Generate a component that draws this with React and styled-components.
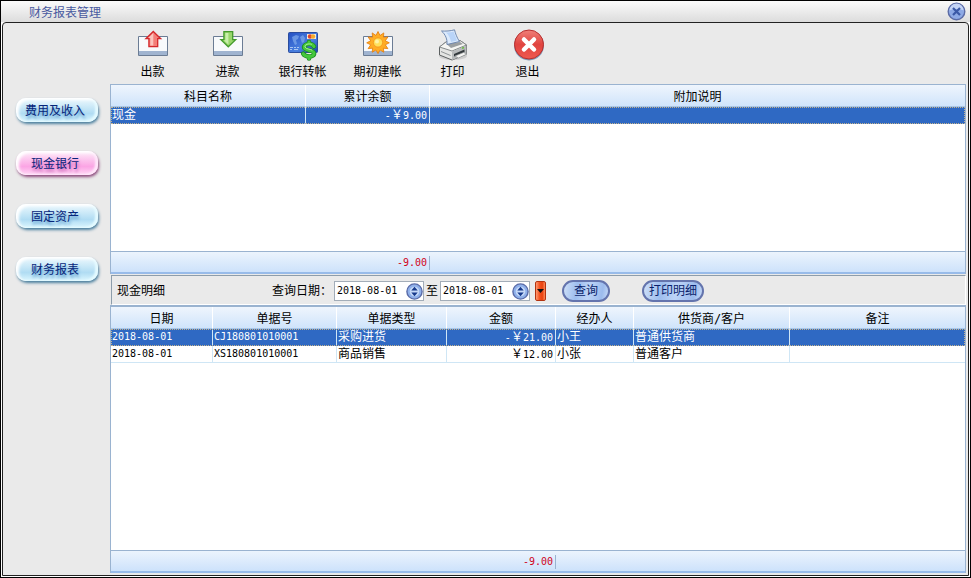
import React, { useState } from 'react'
import styled, { createGlobalStyle } from 'styled-components'

const GlobalStyle = createGlobalStyle`
  * { box-sizing: border-box; }
  body { margin: 0; }
  body, button, input {
    font-family: "DejaVu Sans Mono", "Noto Sans CJK SC", monospace;
    font-size: 12px;
    line-height: 16px;
  }
  button { padding: 0; cursor: pointer; }
`

const Window = styled.div`
  display: flex;
  flex-direction: column;
  min-height: 100vh;
  border: 1px solid #000;
  background: #fff;
`
const TitleBar = styled.header`
  display: flex;
  align-items: center;
  justify-content: space-between;
  height: 21px;
  padding: 0 4px 0 28px;
  background: linear-gradient(#fbfbfb, #dcdcdc);
`
const Title = styled.h1`
  margin: 0;
  padding-top: 3px;
  font-size: 12px;
  font-weight: normal;
  color: #48599f;
`
const CloseButton = styled.button`
  display: flex;
  border: 0;
  background: none;
`
const Body = styled.div`
  display: flex;
  flex: 1;
  margin: 0 1px 1px;
  padding: 0 2px 2px 0;
  border: 1px solid #222;
  border-radius: 4px 4px 0 0;
  background: #eaeaea;
`
const Sidebar = styled.nav`
  display: flex;
  flex-direction: column;
  gap: 29px;
  width: 107px;
  padding: 75px 12px 0 13px;
`
const NavButton = styled.button`
  height: 24px;
  padding: 1px 4px 0 0;
  border: 0;
  border-radius: 10px;
  color: #06257a;
  text-shadow: 1px 3px 3px ${props => props.$active ? '#c763b4' : '#5b9bcd'};
  background: ${props => props.$active
    ? 'linear-gradient(#fff0fb, #fcc6ee 35%, #fba4e4 65%, #ffd9f6)'
    : 'linear-gradient(#eef9fe, #cdeaf8 35%, #b0dcf3 65%, #dcf7ff)'};
  box-shadow:
    inset 3px 2px 3px #fff,
    inset -3px -1px 2px ${props => props.$active ? '#ffe6fa' : '#e4faff'},
    1px 2px 3px ${props => props.$active ? '#8d4a7d' : '#4b7f9e'};
`
const Main = styled.main`
  display: flex;
  flex: 1;
  flex-direction: column;
  min-width: 0;
`
const Toolbar = styled.div`
  display: flex;
  height: 61px;
  padding: 6px 0 0 5px;
`
const ToolButton = styled.button`
  display: flex;
  flex-direction: column;
  align-items: center;
  gap: 3px;
  width: 75px;
  border: 0;
  color: #000;
  background: none;
`
const Panel = styled.section`
  display: flex;
  flex-direction: column;
  flex: ${props => props.$grow ? '1' : '0 0 190px'};
  border: solid #9ab3d0;
  border-width: ${props => props.$grow ? '2px' : '1px'} 1px 0;
  background: #fff;
`
const Table = styled.table`
  width: 100%;
  table-layout: fixed;
  border-spacing: 0;
`
const Col = styled.col`
  width: ${props => props.$width ? props.$width + 'px' : 'auto'};
`
const HeadCell = styled.th`
  height: 22px;
  padding: 2px 0 0;
  border-right: 1px solid #fff;
  border-bottom: 1px solid #a9c6e6;
  font-weight: normal;
  background: linear-gradient(#eff5fd, #cfe4fb);
  &:last-child { border-right: 0; }
`
const Row = styled.tr`
  color: ${props => props.$selected ? '#fff' : '#000'};
  background: ${props => props.$selected ? '#2f69c3' : '#fff'};
  outline: ${props => props.$selected ? '1px dotted #c3b28c' : 'none'};
  outline-offset: -1px;
`
const Cell = styled.td`
  height: 17px;
  padding: 0 2px 0 1px;
  border-right: 1px solid #cfe6f5;
  border-bottom: 1px solid ${props => props.$selected ? '#2f69c3' : '#cfe6f5'};
  font-size: ${props => props.$small ? '10px' : '12px'};
  line-height: 14px;
  text-align: ${props => props.$right ? 'right' : 'left'};
  white-space: nowrap;
  &:last-child { border-right: 0; }
`
/* full-width sign beside the 6px digits */
const Yen = styled.span`
  font-family: "Noto Sans CJK SC", sans-serif;
  font-size: 12px;
  line-height: 12px;
`
const Filler = styled.div`
  flex: 1;
`
const Footer = styled.div`
  display: flex;
  align-items: center;
  height: 23px;
  padding-top: 2px;
  border-top: 1px solid #9ab3d0;
  border-bottom: 2px solid #98bbe9;
  background: linear-gradient(#ecf4fd, #cde2fb);
`
const Total = styled.span`
  width: ${props => props.$width}px;
  padding-right: 2px;
  border-right: 1px solid #9ab3d0;
  font-size: 10px;
  line-height: 14px;
  text-align: right;
  color: #d0021b;
`
const FilterBar = styled.form`
  display: flex;
  align-items: center;
  height: 30px;
  margin: 1px 0 0 1px;
  padding: 2px 0 0 5px;
  border: 1px solid #8d9dab;
  border-bottom-color: #fff;
  border-right-color: #fff;
`
const FilterTitle = styled.h2`
  width: 155px;
  margin: 0;
  font-size: 12px;
  font-weight: normal;
`
const DateField = styled.div`
  display: flex;
  align-items: center;
  width: 90px;
  height: 20px;
  margin: 0 2px;
  border: 1px solid #a3adb8;
  background: #fff;
`
const DateInput = styled.input`
  flex: 1;
  min-width: 0;
  height: 16px;
  padding: 0 0 0 2px;
  border: 0;
  outline: 0;
  font-size: 10px;
  background: none;
`
const SpinButton = styled.button`
  display: flex;
  border: 0;
  background: none;
`
const RangeButton = styled.button`
  display: flex;
  align-items: center;
  justify-content: center;
  width: 11px;
  height: 20px;
  margin-left: 3px;
  border: 1px solid #b3330f;
  border-radius: 2px;
  background: linear-gradient(90deg, #ff9a70, #f4511e 40%, #e9430f 70%, #ff8a5a);
`
const PillButton = styled.button`
  width: ${props => props.$width}px;
  height: 22px;
  margin-left: ${props => props.$gap}px;
  border: 2px solid #6474ad;
  border-radius: 11px;
  color: #0a1f6b;
  line-height: 14px;
  background: linear-gradient(100deg, #cfe0f8, #9dbdee 30%, #bdd4f7 55%, #9cbbed 85%, #c9dcf8);
`

const Tray = () => (
  <>
    <path d="M1.5 7.5h29v19h-29z" fill="#f8fafc" stroke="#6b7c94" />
    <path d="M2 22h28v4H2z" fill="#a0b4d0" />
  </>
)
const OutIcon = () => (
  <svg width="32" height="32" viewBox="0 0 32 32">
    <Tray />
    <path d="M16.300 2.500l7.400 7.200h-3v8h-8.800v-8h-3z" fill="#f47e78" stroke="#d4282c" strokeWidth="1.300" />
    <path d="M16.300 4l-5 5h2v7.500h3z" fill="#fbc4be" />
  </svg>
)
const InIcon = () => (
  <svg width="32" height="32" viewBox="0 0 32 32">
    <Tray />
    <path d="M16.300 17.800l7.400-7.200h-3v-8h-8.800v8h-3z" fill="#98d66b" stroke="#439a2c" strokeWidth="1.300" />
    <path d="M13.400 4h3v11.500l-4.500-4.200h1.500z" fill="#c9efac" />
  </svg>
)
const TransferIcon = () => (
  <svg width="32" height="32" viewBox="0 0 32 32">
    <defs>
      <linearGradient id="card" x1="0" y1="0" x2="1" y2="1">
        <stop offset="0" stopColor="#2450c4" /><stop offset=".6" stopColor="#4a80df" /><stop offset="1" stopColor="#1c46ad" />
      </linearGradient>
    </defs>
    <rect x="1.5" y="3.5" width="29" height="20" rx="1" fill="url(#card)" stroke="#2b4d9d" />
    <path d="M5 8l4-2 3 1-1 3-2 1 1 4-2 1-2-4zM13 8l3-2 2 3-1 4-2 1-1-3z" fill="#80abeb" opacity=".7" />
    <path d="M3 18.500h3m1 0h2m1 0h2M3 20.500h2m2 0h4" stroke="#a9c6f2" />
    <rect x="20" y="5" width="9" height="5" fill="#f6edd6" />
    <circle cx="23" cy="7.500" r="2.200" fill="#df442f" /><circle cx="26" cy="7.500" r="2.200" fill="#f4a82c" />
    <g fill="none" strokeLinecap="round">
      <path d="M27 17.500c-1-2-3-2.800-5.500-2.500-3 .3-5 2-4.200 4 1 2.600 9.200 1.800 9.700 5 .4 2.300-2.300 3.600-5 3.500-2.500-.1-4.800-1-5.800-2.800M22 13v2M22 27.500v2" stroke="#1c8b22" strokeWidth="4.600" />
      <path d="M27 17.500c-1-2-3-2.800-5.500-2.500-3 .3-5 2-4.200 4 1 2.600 9.200 1.800 9.700 5 .4 2.300-2.300 3.600-5 3.500-2.500-.1-4.800-1-5.800-2.800M22 13v2M22 27.500v2" stroke="#45c83c" strokeWidth="3" />
      <path d="M24.500 15.200c-3-1-7 .3-6.500 2.800.7 2 5 2 7 3" stroke="#b4f59c" strokeWidth=".9" />
    </g>
  </svg>
)
const OpeningIcon = () => (
  <svg width="32" height="32" viewBox="0 0 32 32">
    <Tray />
    <path d="M16 2.500l2 4 3.800-2.600-.4 4.500 4.500-.4-2.600 3.800 4 2-4 2 2.600 3.800-4.500-.4.4 4-3.800-2.200-2 3.600-2-3.600-3.800 2.200.4-4-4.500.4 2.600-3.800-4-2 4-2-2.600-3.800 4.500.4-.4-4.500L14 6.500z" fill="#ffad24" stroke="#e57a08" strokeWidth=".8" />
    <circle cx="16" cy="13.500" r="4.600" fill="#ffe15c" stroke="#f2941d" strokeWidth=".8" />
    <circle cx="15" cy="12.500" r="2" fill="#fff3a8" />
  </svg>
)
const PrintIcon = () => (
  <svg width="32" height="32" viewBox="0 0 32 32">
    <ellipse cx="16" cy="27" rx="14" ry="4" fill="#bbb" opacity=".6" />
    <path d="M2.500 18L9 13l14-1.500 6.500 4.500v9L15 31 2.500 26z" fill="#e4e5e3" stroke="#5c6061" strokeLinejoin="round" />
    <path d="M2.500 18L9 13l14-1.500 6.500 4.500L15 22z" fill="#f6f6f3" stroke="#85898a" strokeLinejoin="round" />
    <path d="M9 14.500l14-1.500 3 2L14 19z" fill="#9b9fa1" />
    <path d="M4.500 2c4 .3 9 0 13-1.200 1 4 2.500 8 5 11.700L10 15.500c.5-5-1.500-10-5.500-13.500z" fill="#dceafc" stroke="#647fa9" strokeWidth=".9" />
    <path d="M9 3.500c3 0 5.500-.4 7.500-1l3.500 9-6 1.500c-.5-3.500-2-7-5-9.500z" fill="#b9d4f8" />
    <path d="M15 22.500V31l14.500-6v-8.500z" fill="#b7babb" />
    <path d="M17 25l10.500-4.500V23L17 27.500z" fill="#333a3d" />
    <path d="M18 27l8.500-3.500 3.500 1.500-8.500 4z" fill="#f6f6f4" stroke="#7f8586" strokeWidth=".6" />
    <path d="M4 22.500l9.500 4" stroke="#8e9394" />
    <path d="M25 19.300l2-.8" stroke="#6bbf43" strokeWidth="1.500" />
  </svg>
)
const ExitIcon = () => (
  <svg width="32" height="32" viewBox="0 0 32 32">
    <defs>
      <linearGradient id="exit" x1="0" y1="0" x2="0" y2="1">
        <stop offset="0" stopColor="#f08079" /><stop offset=".5" stopColor="#e04440" /><stop offset="1" stopColor="#ef5950" />
      </linearGradient>
    </defs>
    <circle cx="17" cy="16.500" r="15" fill="#7d97b5" />
    <circle cx="17" cy="15.500" r="14.500" fill="url(#exit)" stroke="#b9302f" />
    <path d="M12 10.500l10 10m0-10l-10 10" stroke="#fff" strokeWidth="4.500" strokeLinecap="round" />
  </svg>
)
const CloseIcon = () => (
  <svg width="19" height="19" viewBox="0 0 19 19">
    <circle cx="9.500" cy="9.500" r="8.300" fill="#8da9e5" stroke="#5b6ba5" strokeWidth="1.400" />
    <path d="M2.500 8.500a7 7 0 0 1 14 0c-4-2-10-2-14 0z" fill="#c3d3f5" />
    <path d="M6 6l7 7m0-7l-7 7" stroke="#3a58a6" strokeWidth="2.200" />
  </svg>
)
const SpinIcon = () => (
  <svg width="17" height="17" viewBox="0 0 17 17">
    <circle cx="8.500" cy="8.500" r="7.600" fill="#8fb0ea" stroke="#596ba8" strokeWidth="1.400" />
    <circle cx="8.500" cy="8.500" r="4.800" fill="#c6d9f8" />
    <path d="M5.300 7.500l3.200-3.700 3.200 3.700zM5.300 9.500l3.200 3.700 3.200-3.700z" fill="#173a8c" />
  </svg>
)

const navItems = ['费用及收入', '现金银行', '固定资产', '财务报表']
const tools = [
  ['出款', OutIcon],
  ['进款', InIcon],
  ['银行转帐', TransferIcon],
  ['期初建帐', OpeningIcon],
  ['打印', PrintIcon],
  ['退出', ExitIcon],
]
const accountCols = [
  { title: '科目名称', width: 195 },
  { title: '累计余额', width: 124, money: true },
  { title: '附加说明' },
]
const accounts = [['现金', '-￥9.00', '']]
const detailCols = [
  { title: '日期', width: 102, num: true },
  { title: '单据号', width: 124, num: true },
  { title: '单据类型', width: 110 },
  { title: '金额', width: 109, money: true },
  { title: '经办人', width: 78 },
  { title: '供货商/客户', width: 156 },
  { title: '备注' },
]
const details = [
  ['2018-08-01', 'CJ180801010001', '采购进货', '-￥21.00', '小王', '普通供货商', ''],
  ['2018-08-01', 'XS180801010001', '商品销售', '￥12.00', '小张', '普通客户', ''],
]

const Money = ({ value }) => {
  const [sign, amount] = value.split('￥')
  return <>{sign}<Yen>￥</Yen>{amount}</>
}

const Grid = ({ cols, rows }) => {
  const [selected, setSelected] = useState(0)
  return (
    <Table>
      <colgroup>
        {cols.map(col => <Col key={col.title} $width={col.width} />)}
      </colgroup>
      <thead>
        <tr>
          {cols.map(col => <HeadCell key={col.title} scope="col">{col.title}</HeadCell>)}
        </tr>
      </thead>
      <tbody>
        {rows.map((row, r) => (
          <Row key={r} $selected={r === selected} onClick={() => setSelected(r)}>
            {row.map((value, c) => (
              <Cell
                key={c}
                $selected={r === selected}
                $right={cols[c].money}
                $small={cols[c].money || cols[c].num}
              >
                {cols[c].money ? <Money value={value} /> : value}
              </Cell>
            ))}
          </Row>
        ))}
      </tbody>
    </Table>
  )
}

const DatePick = ({ id }) => (
  <DateField>
    <DateInput id={id} type="text" defaultValue="2018-08-01" />
    <SpinButton type="button" aria-label="选择日期"><SpinIcon /></SpinButton>
  </DateField>
)

const App = () => {
  const [active, setActive] = useState('现金银行')
  return (
    <Window>
      <GlobalStyle />
      <TitleBar>
        <Title>财务报表管理</Title>
        <CloseButton aria-label="关闭"><CloseIcon /></CloseButton>
      </TitleBar>
      <Body>
        <Sidebar>
          {navItems.map(item => (
            <NavButton key={item} $active={item === active} onClick={() => setActive(item)}>{item}</NavButton>
          ))}
        </Sidebar>
        <Main>
          <Toolbar>
            {tools.map(([label, Icon]) => (
              <ToolButton key={label}><Icon />{label}</ToolButton>
            ))}
          </Toolbar>
          <Panel>
            <Grid cols={accountCols} rows={accounts} />
            <Filler />
            <Footer><Total $width={319}>-9.00</Total></Footer>
          </Panel>
          <FilterBar onSubmit={e => e.preventDefault()}>
            <FilterTitle>现金明细</FilterTitle>
            <label htmlFor="from">查询日期：</label>
            <DatePick id="from" />
            <label htmlFor="to">至</label>
            <DatePick id="to" />
            <RangeButton type="button" aria-label="日期范围">
              <svg width="7" height="4" viewBox="0 0 7 4"><path d="M0 0h7L3.500 4z" fill="#111" /></svg>
            </RangeButton>
            <PillButton $width={48} $gap={16}>查询</PillButton>
            <PillButton type="button" $width={62} $gap={32}>打印明细</PillButton>
          </FilterBar>
          <Panel $grow>
            <Grid cols={detailCols} rows={details} />
            <Filler />
            <Footer><Total $width={445}>-9.00</Total></Footer>
          </Panel>
        </Main>
      </Body>
    </Window>
  )
}

export default App
